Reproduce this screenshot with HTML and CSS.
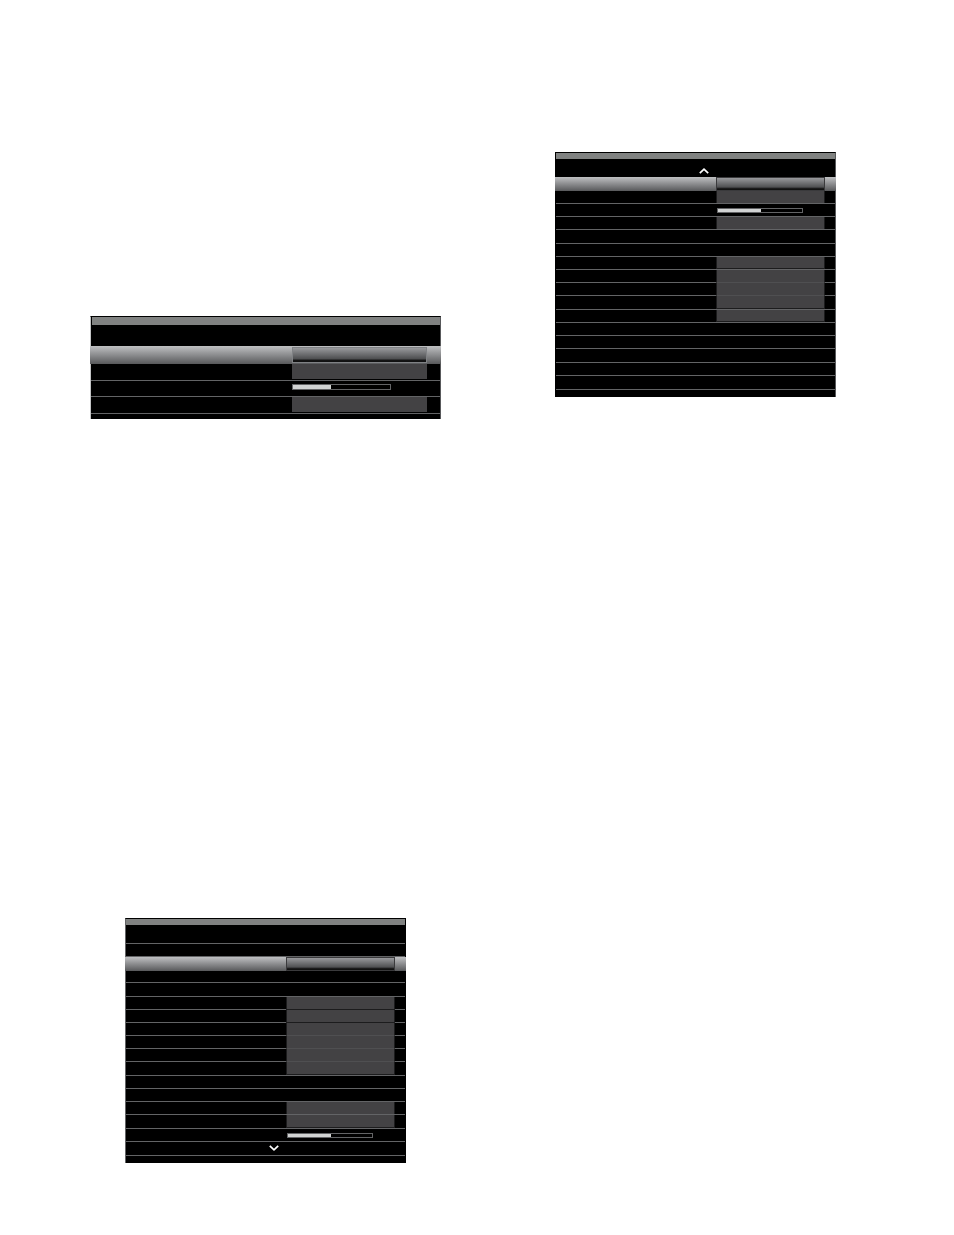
FILE: index.html
```html
<!DOCTYPE html>
<html lang="en">
<head>
    <meta charset="UTF-8">
    <meta name="viewport" content="width=device-width, initial-scale=1.0">
    <title>Setup Menu</title>
    <link rel="stylesheet" href="styles.css">
</head>
<body>
    <main class="page">
        <div class="column">
            <section class="menu menu-large">
                <div class="bar"></div>
                <div class="heading"></div>
                <div class="row selected"><button class="field" aria-label="Option 1"></button></div>
                <div class="row"><button class="field" aria-label="Option 2"></button></div>
                <div class="row short"><input class="slider" type="range" value="39" aria-label="Level"></div>
                <div class="row"><button class="field" aria-label="Option 3"></button></div>
                <div class="foot"></div>
            </section>

            <section class="menu menu-first">
                <div class="bar"></div>
                <div class="heading"></div>
                <div class="row"></div>
                <div class="row selected"><button class="field" aria-label="Option 1"></button></div>
                <div class="row short"></div>
                <div class="row tall"></div>
                <div class="row"><button class="field cut" aria-label="Option 2"></button></div>
                <div class="row"><button class="field cut" aria-label="Option 3"></button></div>
                <div class="row"><button class="field joined" aria-label="Option 4"></button></div>
                <div class="row"><button class="field joined" aria-label="Option 5"></button></div>
                <div class="row"><button class="field joined" aria-label="Option 6"></button></div>
                <div class="row tall"><button class="field gap" aria-label="Option 7"></button></div>
                <div class="row"></div>
                <div class="row"></div>
                <div class="row"><button class="field" aria-label="Option 8"></button></div>
                <div class="row tall"><button class="field gap" aria-label="Option 9"></button></div>
                <div class="row"><input class="slider" type="range" value="51" aria-label="Level"></div>
                <div class="row tall">
                    <svg class="arrow" viewBox="0 0 10 6"><path d="M.8 .8L5 4.8 9.2 .8"/></svg>
                </div>
                <div class="foot"></div>
            </section>
        </div>

        <div class="column">
            <section class="menu menu-second">
                <div class="bar"></div>
                <div class="heading">
                    <svg class="arrow" viewBox="0 0 10 6"><path d="M.8 5.2L5 1.2l4.2 4"/></svg>
                </div>
                <div class="row selected"><button class="field" aria-label="Option 1"></button></div>
                <div class="row"><button class="field" aria-label="Option 2"></button></div>
                <div class="row"><input class="slider" type="range" value="51" aria-label="Level"></div>
                <div class="row"><button class="field" aria-label="Option 3"></button></div>
                <div class="row tall"></div>
                <div class="row"></div>
                <div class="row"><button class="field gap" aria-label="Option 4"></button></div>
                <div class="row"><button class="field joined" aria-label="Option 5"></button></div>
                <div class="row"><button class="field joined" aria-label="Option 6"></button></div>
                <div class="row tall"><button class="field gap" aria-label="Option 7"></button></div>
                <div class="row"><button class="field gap" aria-label="Option 8"></button></div>
                <div class="row"></div>
                <div class="row"></div>
                <div class="row tall"></div>
                <div class="row"></div>
                <div class="row tall"></div>
                <div class="foot"></div>
            </section>
        </div>
    </main>
</body>
</html>
```
FILE: styles.css
```css
* {
    box-sizing: border-box;
}
body {
    margin: 0;
    background: #fff;
    font-family: "Liberation Sans", Arial, sans-serif;
}
.page {
    display: grid;
    grid-template-columns: 1fr 1fr;
    padding: 0 44px 72px 50px;
}
.column {
    display: flex;
    flex-direction: column;
    align-items: center;
}

/* menu box */
.menu {
    width: 100%;
    max-width: 281px;
    background: #000;
    border: 1px solid #000;
    border-bottom: 0;
}
.menu-large {
    max-width: 351px;
    margin-top: 316px;
    border-left-color: #c4c5c6;
    border-right-color: #58595b;
}
.menu-first {
    margin-top: 499px;
    border-left-color: #636466;
}
.menu-second {
    margin-top: 152px;
    border-right-color: #58595b;
}
.bar {
    height: 6px;
    background: #808281;
}
.heading {
    height: 18px;
    padding: 9px 0 0 143px;
}
.foot {
    height: 7px;
}
.arrow {
    display: block;
    width: 10px;
    height: 6px;
    fill: none;
    stroke: #fff;
    stroke-width: 1.7;
}

/* rows */
.row {
    display: grid;
    grid-template-columns: 1fr 109px;
    height: 13px;
    padding-right: 10px;
    border-bottom: 1px solid #636466;
}
.row.tall {
    height: 14px;
}
.row.short {
    height: 12px;
}
.row.selected {
    height: 14px;
    margin: 0 -1px;
    padding-right: 11px;
    border-bottom: 0;
    background: linear-gradient(#bfc0c2, #58595b);
}
.row .arrow {
    margin: 3px 0 0 143px;
}
.field {
    grid-column: 2;
    padding: 0;
    border: 1px solid #1c1c1d;
    border-width: 0 1px;
    background: #434244;
}
.field.joined {
    margin-bottom: -1px;
    border-bottom: 1px solid #4f4f51;
}
.field.cut {
    margin-bottom: -1px;
    border-bottom-width: 1px;
}
.field.gap {
    border-bottom-width: 1px;
}
.selected .field {
    border: 1px solid #3a3a3c;
    background: linear-gradient(#98999c, #505153 75%, #111 90%);
}
.slider {
    grid-column: 2;
    align-self: center;
    appearance: none;
    width: 86px;
    height: 5px;
    margin: 0 0 0 1px;
    border: 1px solid #636466;
    background: linear-gradient(to right, #d1d3d3 51%, #000 51%);
}
.slider::-webkit-slider-thumb {
    appearance: none;
    width: 1px;
    height: 1px;
}

.menu-first .heading {
    height: 19px;
    border-bottom: 1px solid #636466;
}

/* the larger menu */
.menu-large .bar {
    height: 8px;
    margin-left: 1px;
}
.menu-large .heading {
    height: 21px;
}
.menu-large .row {
    grid-template-columns: 1fr 135px;
    height: 17px;
    padding-right: 13px;
}
.menu-large .short {
    height: 16px;
}
.menu-large .selected {
    height: 18px;
    padding-right: 14px;
}
.menu-large .field {
    border-width: 0;
    margin-bottom: 1px;
}
.menu-large .selected .field {
    margin: 1px 0;
    border: 1px solid #808285;
}
.menu-large .slider {
    align-self: start;
    width: 99px;
    height: 6px;
    margin: 3px 0 0;
    background: linear-gradient(to right, #d1d3d3 39%, #000 39%);
}
.menu-large .foot {
    height: 5px;
}
```
